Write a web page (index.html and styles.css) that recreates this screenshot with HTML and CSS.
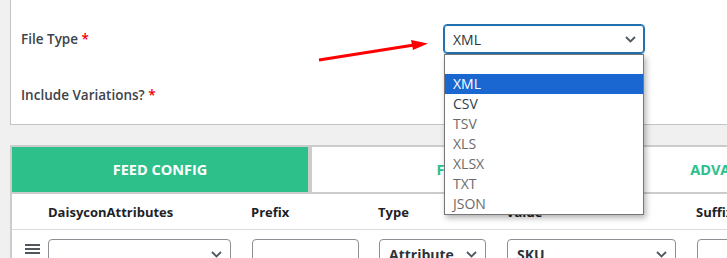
FILE: index.html
```html
<!DOCTYPE html>
<html lang="en">
<head>
  <meta charset="UTF-8" />
  <meta name="viewport" content="width=device-width, initial-scale=1" />
  <title>Feed Settings</title>
  <link rel="stylesheet" href="styles.css">
</head>
<body>
  <div class="page">
    <section class="settings">
      <div class="field-row">
        <label class="field-label">File Type <span class="req">*</span></label>
        <div class="select-wrap">
          <div class="select focused">
            <span>XML</span>
            <svg class="chev" width="11" height="7" viewBox="0 0 11 7"><path d="M1 1l4.5 4.5L10 1" /></svg>
          </div>
          <ul class="dropdown">
            <li class="blank"></li>
            <li class="active">XML</li>
            <li class="dark">CSV</li>
            <li>TSV</li>
            <li>XLS</li>
            <li>XLSX</li>
            <li>TXT</li>
            <li>JSON</li>
          </ul>
        </div>
      </div>
      <div class="field-row second">
        <label class="field-label">Include Variations? <span class="req">*</span></label>
      </div>
      <!-- annotation arrow pointing at the file type select -->
      <svg class="arrow" width="135" height="30" viewBox="0 0 135 30">
        <line x1="19" y1="25" x2="114" y2="10" />
        <polygon points="128,8.5 111,5 113,15" />
      </svg>
    </section>

    <section class="mapping">
      <div class="tabs">
        <div class="tab active">FEED CONFIG</div>
        <div class="tab">FILTER</div>
        <div class="tab">ADVANCED CONFIG</div>
      </div>
      <div class="grid head">
        <div></div>
        <div>DaisyconAttributes</div>
        <div>Prefix</div>
        <div>Type</div>
        <div>Value</div>
        <div>Suffix</div>
      </div>
      <div class="grid row">
        <div class="handle"><span></span><span></span><span></span></div>
        <div class="control first">
          <svg class="chev" width="11" height="7" viewBox="0 0 11 7"><path d="M1 1l4.5 4.5L10 1" /></svg>
        </div>
        <div class="control input w107"></div>
        <div class="control w107"><span>Attribute</span>
          <svg class="chev" width="11" height="7" viewBox="0 0 11 7"><path d="M1 1l4.5 4.5L10 1" /></svg>
        </div>
        <div class="control w169"><span>SKU</span>
          <svg class="chev" width="11" height="7" viewBox="0 0 11 7"><path d="M1 1l4.5 4.5L10 1" /></svg>
        </div>
        <div class="control input wide"></div>
      </div>
    </section>
  </div>
</body>
</html>
```

FILE: styles.css
```css
:root {
  --green: #2dc08a;
  --line: #cccccc;
  --text: #1d2327;
  --label: #3c434a;
  --blue: #2271b1;
}
* {
  box-sizing: border-box;
}
body {
  margin: 0;
  background: #f0f0f1;
  font-family: 'Open Sans', sans-serif;
  color: var(--text);
  overflow: hidden;
}
.page {
  padding-left: 10px;
}
.settings {
  position: relative;
  height: 125px;
  background: #fff;
  border-left: 1px solid #c3c4c7;
  border-bottom: 1px solid #c3c4c7;
  padding: 24px 0 0 10px;
}
.field-row {
  display: grid;
  grid-template-columns: 422px 202px;
  align-items: center;
  height: 30px;
}
.field-row.second {
  margin-top: 26px;
}
.field-label {
  font-size: 13.5px;
  font-weight: 600;
  color: var(--label);
}
.req {
  color: #e00;
}
.select-wrap {
  position: relative;
}
.select {
  height: 30px;
  display: flex;
  align-items: center;
  justify-content: space-between;
  padding: 0 8px 0 9px;
  border: 1px solid #8c8f94;
  border-radius: 4px;
  font-size: 14px;
  color: #2c3338;
}
.select.focused {
  border-color: var(--blue);
  box-shadow: inset 0 0 0 1px var(--blue);
}
.chev {
  fill: none;
  stroke: #50575e;
  stroke-width: 1.8;
}
.dropdown {
  position: absolute;
  top: 30px;
  left: 1px;
  width: 200px;
  margin: 0;
  padding: 0;
  list-style: none;
  background: #fff;
  border: 1px solid #767676;
  box-shadow: 2px 3px 6px rgba(0, 0, 0, 0.3);
  z-index: 10;
}
.dropdown li {
  height: 20px;
  line-height: 20px;
  padding-left: 8px;
  font-size: 14px;
  color: #6b6b6b;
}
.dropdown li.blank {
  height: 19px;
}
.dropdown li.dark {
  color: #2c3e50;
}
.dropdown li.active {
  background: #1a67d2;
  color: #fff;
}
.arrow {
  position: absolute;
  left: 289px;
  top: 35px;
}
.arrow line {
  stroke: #f00;
  stroke-width: 3;
}
.arrow polygon {
  fill: #f00;
}
.mapping {
  margin-top: 20px;
  background: #fff;
  border-top: 2px solid var(--line);
  border-left: 2px solid var(--line);
  overflow: hidden;
}
.tabs {
  display: flex;
  gap: 4px;
  background: var(--line);
  border-bottom: 2px solid var(--line);
}
.tab {
  flex: none;
  width: 296px;
  height: 45px;
  display: flex;
  align-items: center;
  justify-content: center;
  background: #fff;
  color: var(--green);
  font-size: 14.5px;
  font-weight: 700;
}
.tab.active {
  background: var(--green);
  color: #fff;
}
.grid {
  display: grid;
  grid-template-columns: 36px 203px 127px 128px 190px 1fr;
}
.head {
  height: 36px;
  align-items: center;
  border-bottom: 1px solid #dcdcde;
  font-size: 13px;
  font-weight: 700;
}
.row {
  padding-top: 9px;
  height: 60px;
}
.handle {
  margin: 5px 0 0 13px;
  display: flex;
  flex-direction: column;
  gap: 2px;
}
.handle span {
  display: block;
  width: 15px;
  height: 2px;
  background: #50575e;
}
.control {
  height: 30px;
  margin-left: 1px;
  display: flex;
  align-items: center;
  justify-content: space-between;
  padding: 0 8px 0 9px;
  border: 1px solid #8c8f94;
  border-radius: 4px;
  font-size: 14px;
  font-weight: 700;
  color: #2c3338;
}
.control.first {
  margin-left: 0;
  width: 183px;
  justify-content: flex-end;
}
.w107 {
  width: 107px;
}
.w169 {
  width: 169px;
}
.wide {
  width: 200px;
}
```
